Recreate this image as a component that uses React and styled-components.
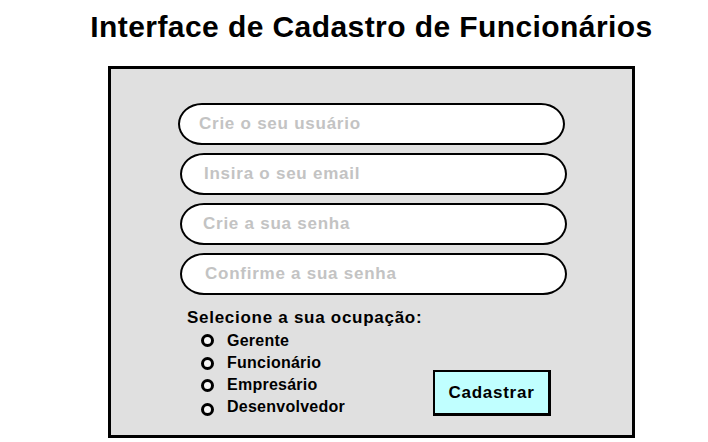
import React from "react";
import styled, { createGlobalStyle } from "styled-components";

const Global = createGlobalStyle`
  html, body { margin: 0; padding: 0; background: #ffffff; }
  body { font-family: "Liberation Sans", Arial, sans-serif; }
`;

const Page = styled.div`
  width: 708px;
  height: 442px;
  display: flex;
  flex-direction: column;
  padding-left: 108px;
  box-sizing: border-box;
`;

const Title = styled.h1`
  margin: 11px 0 0 0;
  width: 527px;
  display: flex;
  justify-content: center;
  white-space: nowrap;
  font-size: 30px;
  line-height: 31px;
  font-weight: 700;
  color: #000;
  letter-spacing: 0.42px;
`;

const Panel = styled.div`
  margin-top: 24px;
  width: 527px;
  height: 372px;
  box-sizing: border-box;
  border: 3px solid #000;
  background: #e0e0e0;
  padding: 34px 66px 0 68px;
  display: flex;
  flex-direction: column;
`;

const Fields = styled.div`
  display: flex;
  flex-direction: column;
  gap: 8px;
`;

const Field = styled.input`
  box-sizing: border-box;
  width: 387px;
  height: 42px;
  margin-left: ${(p) => p.$shift || 0}px;
  border: 2px solid #000;
  border-radius: 24px / 21px;
  background: #ffffff;
  padding: 0 0 0 ${(p) => p.$pad || 19}px;
  font-family: "Liberation Sans", Arial, sans-serif;
  font-weight: 700;
  font-size: 17px;
  letter-spacing: 0.75px;
  color: #000;
  outline: none;
  &::placeholder { color: #c3c3c3; opacity: 1; }
`;

const Bottom = styled.div`
  flex: 1;
  display: flex;
  justify-content: space-between;
  align-items: flex-start;
  margin-top: 13px;
  padding-right: 15px;
`;

const Occupation = styled.div`
  display: flex;
  flex-direction: column;
  padding-left: 8px;
`;

const Label = styled.div`
  font-size: 17px;
  line-height: 20px;
  font-weight: 700;
  color: #000;
  letter-spacing: 0.72px;
`;

const Options = styled.div`
  display: flex;
  flex-direction: column;
  gap: 4px;
  margin-top: 4px;
  padding-left: 14px;
`;

const Option = styled.label`
  display: flex;
  align-items: center;
  gap: 13px;
  height: 18px;
  font-size: 16px;
  letter-spacing: 0.25px;
  font-weight: 700;
  color: #000;
`;

const Dot = styled.span`
  width: 13px;
  height: 13px;
  box-sizing: border-box;
  border: 3px solid #000;
  border-radius: 50%;
  background: #f6f6f6;
  margin-top: ${(p) => p.$dy || 0}px;
`;

const Button = styled.button`
  align-self: flex-end;
  width: 118px;
  height: 46px;
  margin-bottom: 19px;
  box-sizing: border-box;
  background: #c0ffff;
  border: 2px solid #000;
  border-right-width: 3px;
  border-bottom-width: 3px;
  font-family: "Liberation Sans", Arial, sans-serif;
  font-size: 17px;
  letter-spacing: 0.75px;
  font-weight: 700;
  color: #000;
  padding: 0;
`;

const fields = [
  { ph: "Crie o seu usuário", shift: -1, pad: 19 },
  { ph: "Insira o seu email", shift: 1, pad: 22 },
  { ph: "Crie a sua senha", shift: 1, pad: 21 },
  { ph: "Confirme a sua senha", shift: 1, pad: 23 },
];

const options = [
  { t: "Gerente", dy: -1 },
  { t: "Funcionário", dy: 0 },
  { t: "Empresário", dy: 1 },
  { t: "Desenvolvedor", dy: 4 },
];

export default function App() {
  return (
    <>
      <Global />
      <Page>
        <Title>Interface de Cadastro de Funcionários</Title>
        <Panel>
          <Fields>
            {fields.map((f) => (
              <Field key={f.ph} placeholder={f.ph} $shift={f.shift} $pad={f.pad} />
            ))}
          </Fields>
          <Bottom>
            <Occupation>
              <Label>Selecione a sua ocupação:</Label>
              <Options>
                {options.map((o) => (
                  <Option key={o.t}>
                    <Dot $dy={o.dy} />
                    {o.t}
                  </Option>
                ))}
              </Options>
            </Occupation>
            <Button>Cadastrar</Button>
          </Bottom>
        </Panel>
      </Page>
    </>
  );
}
